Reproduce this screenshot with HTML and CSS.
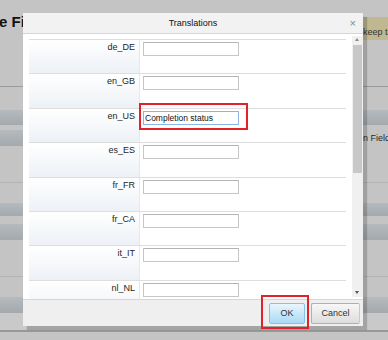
FILE: index.html
```html
<!DOCTYPE html>
<html lang="en">
<head>
    <meta charset="UTF-8">
    <title>Translations</title>
    <link rel="stylesheet" href="styles.css">
</head>
<body>
    <div class="page">
        <!-- page behind the modal -->
        <div class="page-head">
            <h1 class="page-title">e Fields</h1>
            <div class="notice">keep th</div>
        </div>
        <div class="gap h23"></div>
        <div class="band h15"></div>
        <div class="gap h5"></div>
        <div class="split-row">
            <div class="band"></div>
            <div class="split-text">n Field</div>
        </div>
        <div class="gap h36"></div>
        <div class="rule"></div>
        <div class="gap h20"></div>
        <div class="band h13"></div>
        <div class="gap h8"></div>
        <div class="band h16"></div>
        <div class="gap h36"></div>
        <div class="rule"></div>
        <div class="gap h20"></div>
        <div class="band h16"></div>
        <div class="gap h17 light"></div>
        <div class="rule dark"></div>

        <!-- modal -->
        <div class="dialog">
            <div class="dialog-head">
                <span></span>
                <span class="dialog-title">Translations</span>
                <span class="dialog-close">&times;</span>
            </div>
            <div class="dialog-body">
                <div class="grid-wrap">
                    <div class="grid">
                        <div class="row"><div class="label">de_DE</div><div class="value"><input type="text"></div></div>
                        <div class="row"><div class="label">en_GB</div><div class="value"><input type="text"></div></div>
                        <div class="row"><div class="label">en_US</div><div class="value"><input type="text" class="focused" value="Completion status"></div></div>
                        <div class="row"><div class="label">es_ES</div><div class="value"><input type="text"></div></div>
                        <div class="row"><div class="label">fr_FR</div><div class="value"><input type="text"></div></div>
                        <div class="row"><div class="label">fr_CA</div><div class="value"><input type="text"></div></div>
                        <div class="row"><div class="label">it_IT</div><div class="value"><input type="text"></div></div>
                        <div class="row"><div class="label">nl_NL</div><div class="value"><input type="text"></div></div>
                    </div>
                </div>
                <div class="scrollbar">
                    <span class="arrow-up"></span>
                    <div class="thumb"></div>
                    <span class="arrow-down"></span>
                </div>
            </div>
            <div class="dialog-foot">
                <button class="btn btn-ok">OK</button>
                <button class="btn">Cancel</button>
            </div>
        </div>

        <!-- annotation boxes -->
        <div class="mark mark-input"></div>
        <div class="mark mark-ok"></div>
    </div>
</body>
</html>
```

FILE: styles.css
```css
* {
    box-sizing: border-box;
}

body {
    margin: 0;
    width: 388px;
    height: 340px;
    overflow: hidden;
    background: #c4c4c4;
    font-family: "Liberation Sans", Arial, sans-serif;
    color: #333;
}

.page {
    position: relative;
    height: 340px;
}

/* background page */
.page-head {
    height: 87px;
    display: flex;
    align-items: flex-start;
    border-bottom: 1px solid #9b9b9b;
}

.page-title {
    flex: 1;
    margin: 0;
    padding-top: 13px;
    text-indent: -1px;
    font-size: 15px;
    line-height: 18px;
    font-weight: bold;
    color: #111;
    white-space: nowrap;
}

.notice {
    flex-shrink: 0;
    width: 48px;
    height: 23px;
    margin-top: 17px;
    padding: 9px 0 0 23px;
    background: #bfb890;
    font-size: 9px;
    line-height: 12px;
    white-space: nowrap;
    overflow: hidden;
    color: #333;
}

.gap { height: 10px; }
.h5 { height: 5px; }
.h8 { height: 8px; }
.h13 { height: 13px; }
.h15 { height: 15px; }
.h16 { height: 16px; }
.h17 { height: 17px; }
.h20 { height: 20px; }
.h23 { height: 23px; }
.h36 { height: 36px; }

.light {
    background: #c9c9c9;
}

.band {
    background: linear-gradient(#b5babe, #a4a9ad);
}

.split-row {
    display: grid;
    grid-template-columns: 200px 1fr;
    height: 16px;
}

.split-text {
    padding-left: 163px;
    font-size: 9px;
    line-height: 16px;
    white-space: nowrap;
    color: #2a2a2a;
}

.rule {
    height: 1px;
    background: #b3b3b3;
}

.rule.dark {
    height: 2px;
    background: #989898;
}

/* modal */
.dialog {
    position: absolute;
    left: 23px;
    top: 13px;
    width: 340px;
    height: 313px;
    display: flex;
    flex-direction: column;
    background: #fff;
    box-shadow: 4px 4px 1px rgba(0, 0, 0, 0.18);
}

.dialog-head {
    height: 21px;
    display: grid;
    grid-template-columns: 1fr auto 1fr;
    align-items: center;
    background: #f2f2f2;
    border-bottom: 1px solid #d6d6d6;
    font-size: 9px;
}

.dialog-title {
    color: #111;
}

.dialog-close {
    justify-self: end;
    padding-right: 7px;
    font-size: 11px;
    line-height: 11px;
    color: #8a8a8a;
}

.dialog-body {
    flex: 1;
    min-height: 0;
    display: flex;
    padding-left: 6px;
}

.grid-wrap {
    width: 317px;
    padding-top: 5px;
    overflow: hidden;
}

.grid {
    border-top: 1px solid #dedede;
}

.row {
    display: flex;
    height: 34.4px;
    border-bottom: 1px solid #dedede;
}

.label {
    width: 111px;
    padding: 2px 4px 0 0;
    text-align: right;
    font-size: 9px;
    line-height: 11px;
    color: #1e1e1e;
    border-right: 1px solid #e8e8e8;
    background: linear-gradient(#fff, #edf1f6);
}

.value {
    flex: 1;
    padding: 2px 0 0 3px;
}

.value input {
    display: block;
    width: 96px;
    height: 14px;
    margin: 0;
    padding: 0 1px;
    border: 1px solid #c6c6c6;
    border-top-color: #b4b4b4;
    font-family: "Liberation Sans", Arial, sans-serif;
    font-size: 8.5px;
    color: #111;
    outline: none;
}

.value input.focused {
    border-color: #8db4e4;
}

.scrollbar {
    position: relative;
    width: 11px;
    margin: 2px 0 2px 6px;
    background: #f0f0f0;
}

.thumb {
    position: absolute;
    left: 1px;
    right: 1px;
    top: 9px;
    height: 128px;
    background: #c8c8c8;
}

.arrow-up,
.arrow-down {
    position: absolute;
    left: 3px;
    width: 0;
    height: 0;
    border-left: 2.5px solid transparent;
    border-right: 2.5px solid transparent;
}

.arrow-up {
    top: 2px;
    border-bottom: 3px solid #8a8a8a;
}

.arrow-down {
    bottom: 3px;
    border-top: 3px solid #555;
}

.dialog-foot {
    height: 27px;
    display: flex;
    justify-content: flex-end;
    align-items: center;
    gap: 6px;
    padding-right: 3px;
    background: #efefef;
    border-top: 1px solid #d6d6d6;
}

.btn {
    width: 49px;
    height: 21px;
    padding: 0;
    font-family: "Liberation Sans", Arial, sans-serif;
    font-size: 9px;
    color: #333;
    border: 1px solid #b0b0b0;
    border-right-color: #d2cba6;
    border-radius: 2px;
    background: linear-gradient(#f7f7f7, #dddddd);
}

.btn-ok {
    width: 36px;
    border-color: #86c1ea;
    background: linear-gradient(#eaf6fd, #a8d9f5);
}

/* red highlight boxes */
.mark {
    position: absolute;
    border: 2px solid #e3212b;
}

.mark-input {
    left: 139px;
    top: 103px;
    width: 109px;
    height: 27px;
}

.mark-ok {
    left: 261px;
    top: 295px;
    width: 48px;
    height: 34px;
}
```
